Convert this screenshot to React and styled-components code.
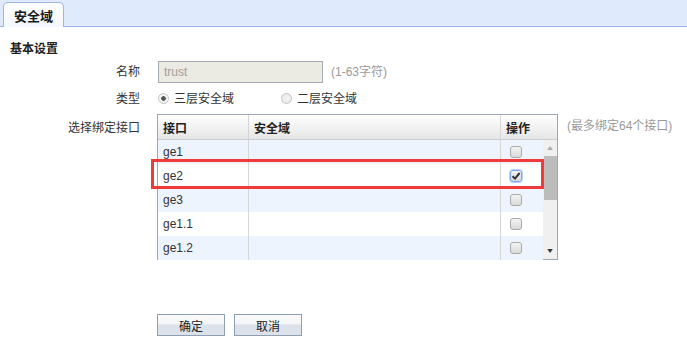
import React from 'react';
import styled, { createGlobalStyle } from 'styled-components';

const rows = [
  { name: 'ge1', checked: false },
  { name: 'ge2', checked: true },
  { name: 'ge3', checked: false },
  { name: 'ge1.1', checked: false },
  { name: 'ge1.2', checked: false },
];

const App = () => {
  return (
    <Page>
      <GlobalStyle />
      <TabBar>
        <Tab>安全域</Tab>
      </TabBar>
      <Section>基本设置</Section>
      <Form>
        <Label>名称</Label>
        <Field $h={22}>
          <Input value="trust" readOnly />
          <Hint>(1-63字符)</Hint>
        </Field>

        <Label>类型</Label>
        <Field $h={21}>
          <RadioItem $w={123}>
            <Radio $on />
            三层安全域
          </RadioItem>
          <RadioItem>
            <Radio />
            二层安全域
          </RadioItem>
        </Field>

        <Label $top>选择绑定接口</Label>
        <Field $top>
          <TableWrap>
            <HeadRow>
              <HeadCell $w={91}>接口</HeadCell>
              <HeadCell $w={252}>安全域</HeadCell>
              <HeadCell $w={56} $last>操作</HeadCell>
            </HeadRow>
            <Body>
              <Rows>
                {rows.map((r, i) => (
                  <Row key={r.name} $alt={i % 2 === 0}>
                    <Cell $w={91}>{r.name}</Cell>
                    <Cell $w={252}></Cell>
                    <Cell $w={42} $pad={9} $last>
                      <Check $on={r.checked}>{r.checked && <Tick />}</Check>
                    </Cell>
                  </Row>
                ))}
              </Rows>
              <Scrollbar>
                <Arrow>▲</Arrow>
                <Track>
                  <Thumb />
                </Track>
                <Arrow $down>▼</Arrow>
              </Scrollbar>
            </Body>
            <Highlight />
          </TableWrap>
          <Hint $side>(最多绑定64个接口)</Hint>
        </Field>
      </Form>
      <Buttons>
        <Button>确定</Button>
        <Button>取消</Button>
      </Buttons>
    </Page>
  );
};

const Tick = () => (
  <svg width="10" height="10" viewBox="0 0 10 10">
    <path d="M1.5 5.2 L4 7.6 L8.6 2" fill="none" stroke="#333" strokeWidth="2" />
  </svg>
);

export default App;

const GlobalStyle = createGlobalStyle`
  body {
    margin: 0;
    background: #fff;
    font-family: "Liberation Sans", "Noto Sans CJK SC", sans-serif;
    font-size: 12px;
    color: #333;
  }
`;

const Page = styled.div`
  width: 687px;
  height: 347px;
  overflow: hidden;
`;

const TabBar = styled.div`
  height: 27px;
  background: #dfeafd;
  border-bottom: 1px solid #9db6e6;
  display: flex;
  align-items: flex-end;
  padding-left: 3px;
  box-sizing: border-box;
`;

const Tab = styled.div`
  width: 61px;
  height: 25px;
  margin-bottom: -1px;
  box-sizing: border-box;
  border: 1px solid #9db6e6;
  border-bottom: none;
  border-radius: 5px 5px 0 0;
  background: linear-gradient(#ffffff, #f3f7fe);
  display: flex;
  align-items: center;
  justify-content: center;
  font-weight: bold;
  font-size: 13px;
  color: #1a1a1a;
`;

const Section = styled.div`
  margin: 14px 0 0 10px;
  font-weight: bold;
  font-size: 12px;
  line-height: 16px;
  color: #222;
`;

const Form = styled.div`
  display: grid;
  grid-template-columns: 140px 1fr;
  column-gap: 17px;
  row-gap: 5px;
  margin-top: 4px;
`;

const Label = styled.div`
  text-align: right;
  align-self: ${p => (p.$top ? 'start' : 'center')};
  padding-top: ${p => (p.$top ? '5px' : '0')};
  line-height: 18px;
`;

const Field = styled.div`
  display: flex;
  align-items: ${p => (p.$top ? 'flex-start' : 'center')};
  height: ${p => (p.$h ? `${p.$h}px` : 'auto')};
`;

const Input = styled.input`
  width: 165px;
  height: 22px;
  box-sizing: border-box;
  margin: 0 0 0 1px;
  padding: 0 5px;
  border: 1px solid #a3acb5;
  background: #ebeae3;
  color: #a09f99;
  font-family: "Liberation Sans", "Noto Sans CJK SC", sans-serif;
  font-size: 12px;
  outline: none;
`;

const Hint = styled.span`
  color: #9a9a9a;
  margin-left: ${p => (p.$side ? '9px' : '8px')};
  line-height: 18px;
  margin-top: ${p => (p.$side ? '3px' : '0')};
`;

const RadioItem = styled.label`
  display: flex;
  align-items: center;
  width: ${p => (p.$w ? `${p.$w}px` : 'auto')};
  line-height: 18px;
  color: #333;
`;

const Radio = styled.span`
  width: 11px;
  height: 11px;
  margin: 0 5px 0 1px;
  border-radius: 50%;
  box-sizing: border-box;
  border: 1px solid #c4c4c4;
  background: radial-gradient(circle, ${p => (p.$on ? '#555 0 2px, #f4f4f4 2.6px' : '#f2f2f2 0, #e8e8e8 100%')});
`;

const TableWrap = styled.div`
  position: relative;
  width: 401px;
  border: 1px solid #9ba7b3;
  box-sizing: border-box;
`;

const HeadRow = styled.div`
  display: flex;
  height: 24px;
  background: linear-gradient(#ffffff, #e6e6e6);
  border-bottom: 1px solid #c9ced3;
`;

const HeadCell = styled.div`
  width: ${p => p.$w}px;
  flex: none;
  box-sizing: border-box;
  padding-left: 5px;
  border-right: ${p => (p.$last ? 'none' : '1px solid #d6d6d6')};
  font-weight: bold;
  color: #222;
  display: flex;
  align-items: center;
`;

const Body = styled.div`
  display: flex;
  height: 119px;
`;

const Rows = styled.div`
  width: 385px;
`;

const Row = styled.div`
  display: flex;
  height: 24px;
  background: ${p => (p.$alt ? '#edf4fd' : '#ffffff')};
`;

const Cell = styled.div`
  width: ${p => p.$w}px;
  flex: none;
  box-sizing: border-box;
  padding-left: ${p => (p.$pad ? `${p.$pad}px` : '5px')};
  border-right: ${p => (p.$last ? 'none' : '1px solid #d6d6d6')};
  display: flex;
  align-items: center;
  color: #333;
`;

const Check = styled.span`
  width: 12px;
  height: 12px;
  box-sizing: border-box;
  border-radius: 3px;
  border: 1px solid ${p => (p.$on ? '#7aa6e8' : '#a9a9a9')};
  box-shadow: ${p => (p.$on ? '0 0 0 1px #b9d2f5' : 'none')};
  background: linear-gradient(#f4f4f4, #dadada);
  display: flex;
  align-items: center;
  justify-content: center;
`;

const Scrollbar = styled.div`
  width: 14px;
  background: #f0f0f0;
  display: flex;
  flex-direction: column;
`;

const Arrow = styled.div`
  height: ${p => (p.$down ? '17px' : '16px')};
  font-size: 7px;
  line-height: ${p => (p.$down ? '17px' : '16px')};
  text-align: center;
  color: ${p => (p.$down ? '#333' : '#aaa')};
  transform: scaleX(1.3);
`;

const Track = styled.div`
  flex: 1;
`;

const Thumb = styled.div`
  width: 13px;
  height: 44px;
  background: #bcbcbc;
  margin-left: 1px;
`;

const Highlight = styled.div`
  position: absolute;
  left: -7px;
  top: 44px;
  width: 393px;
  height: 30px;
  box-sizing: border-box;
  border: 3px solid #f03a3a;
  pointer-events: none;
`;

const Buttons = styled.div`
  display: flex;
  gap: 9px;
  margin: 54px 0 0 157px;
`;

const Button = styled.button`
  width: 68px;
  height: 22px;
  box-sizing: border-box;
  border: 1px solid #8e9fb3;
  background: linear-gradient(#fbfbfc 0%, #f3f5f7 45%, #dbe2ea 50%, #dbe2ea 100%);
  font-family: "Liberation Sans", "Noto Sans CJK SC", sans-serif;
  font-size: 12px;
  color: #222;
  padding: 0;
`;
